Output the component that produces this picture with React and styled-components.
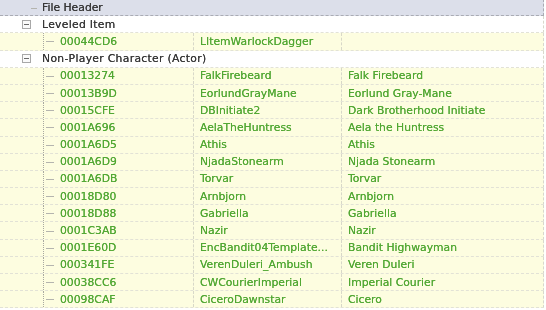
import styled, { createGlobalStyle } from "styled-components"

const GlobalStyle = createGlobalStyle`
    body {
        margin: 0;
        background: #ffffff;
        font-family: "DejaVu Sans", "Liberation Sans", sans-serif;
    }
`

const Tree = styled.div`
    width: 546px;
    height: 310px;
    overflow: hidden;
    margin-top: -1px;
    filter: blur(0.45px);
    font-size: 10.8px;
`

const rowBackground = {
    header: "#dcdfea",
    group: "#ffffff",
    item: "#fdfde0",
}

const Row = styled.div`
    box-sizing: border-box;
    display: grid;
    grid-template-columns: 194px 148px 201px;
    height: 17.2px;
    width: 544px;
    background: ${p => rowBackground[p.$kind]};
    border-bottom: 1px dashed ${p => p.$kind === "header" ? "#a9abb3" : "#e2e2d6"};
    border-right: 1px dashed ${p => p.$kind === "header" ? "#a9abb3" : "#d8d8cc"};
    border-top: ${p => p.$kind === "header" ? "1px dashed #a9abb3" : "none"};
`

const Cell = styled.div`
    display: flex;
    align-items: center;
    height: 100%;
    padding-left: 6px;
    white-space: nowrap;
    overflow: ${p => p.$span ? "visible" : "hidden"};
    grid-column: ${p => p.$span ? "1 / -1" : "auto"};
    border-right: ${p => p.$line ? "1px dashed #d8d8c8" : "none"};
    color: ${p => p.$green ? "#52a834" : "#383838"};
    text-shadow: 0 0 0.4px currentColor;
    box-sizing: border-box;
`

const TreeCell = styled(Cell)`
    padding-left: 0;
`

const GroupLabel = styled.span`
    letter-spacing: 0.3px;
`

const Guide = styled.span`
    position: relative;
    flex: none;
    display: block;
    height: 100%;
    width: ${p => p.$width}px;
    margin-left: ${p => p.$left}px;
    margin-right: ${p => p.$gap}px;
    border-left: ${p => p.$vertical ? "1px dotted #a8a8a0" : "none"};

    &::after {
        content: "";
        position: absolute;
        left: 2px;
        right: 0;
        top: 50%;
        border-top: 1px solid #b4b4ae;
    }
`

const Expander = styled.span`
    position: relative;
    flex: none;
    box-sizing: border-box;
    width: 9px;
    height: 9px;
    margin-left: 22px;
    margin-right: 11px;
    border: 1px solid #a8a8a8;
    background: #fafafa;

    &::after {
        content: "";
        position: absolute;
        left: 1px;
        right: 1px;
        top: 3px;
        border-top: 1px solid #6a6a6a;
    }
`

const groups = [
    {
        title: "Leveled Item",
        items: [["00044CD6", "LItemWarlockDagger", ""]],
    },
    {
        title: "Non-Player Character (Actor)",
        items: [
            ["00013274", "FalkFirebeard", "Falk Firebeard"],
            ["00013B9D", "EorlundGrayMane", "Eorlund Gray-Mane"],
            ["00015CFE", "DBInitiate2", "Dark Brotherhood Initiate"],
            ["0001A696", "AelaTheHuntress", "Aela the Huntress"],
            ["0001A6D5", "Athis", "Athis"],
            ["0001A6D9", "NjadaStonearm", "Njada Stonearm"],
            ["0001A6DB", "Torvar", "Torvar"],
            ["00018D80", "Arnbjorn", "Arnbjorn"],
            ["00018D88", "Gabriella", "Gabriella"],
            ["0001C3AB", "Nazir", "Nazir"],
            ["0001E60D", "EncBandit04Template...", "Bandit Highwayman"],
            ["000341FE", "VerenDuleri_Ambush", "Veren Duleri"],
            ["00038CC6", "CWCourierImperial", "Imperial Courier"],
            ["00098CAF", "CiceroDawnstar", "Cicero"],
        ],
    },
]

const ItemRow = ({ formId, editorId, name }) => (
    <Row $kind="item">
        <TreeCell $line $green>
            <Guide $vertical $left={43} $width={10} $gap={6} />
            {formId}
        </TreeCell>
        <Cell $line $green>{editorId}</Cell>
        <Cell $green>{name}</Cell>
    </Row>
)

export default function App() {
    return (<>
        <GlobalStyle />
        <Tree>
            <Row $kind="header">
                <TreeCell $span>
                    <Guide $left={29} $width={8} $gap={5} />
                    File Header
                </TreeCell>
            </Row>
            {groups.map(group => (
                <div key={group.title}>
                    <Row $kind="group">
                        <TreeCell $span>
                            <Expander />
                            <GroupLabel>{group.title}</GroupLabel>
                        </TreeCell>
                    </Row>
                    {group.items.map(([formId, editorId, name]) => (
                        <ItemRow key={formId} formId={formId} editorId={editorId} name={name} />
                    ))}
                </div>
            ))}
        </Tree>
    </>)
}
